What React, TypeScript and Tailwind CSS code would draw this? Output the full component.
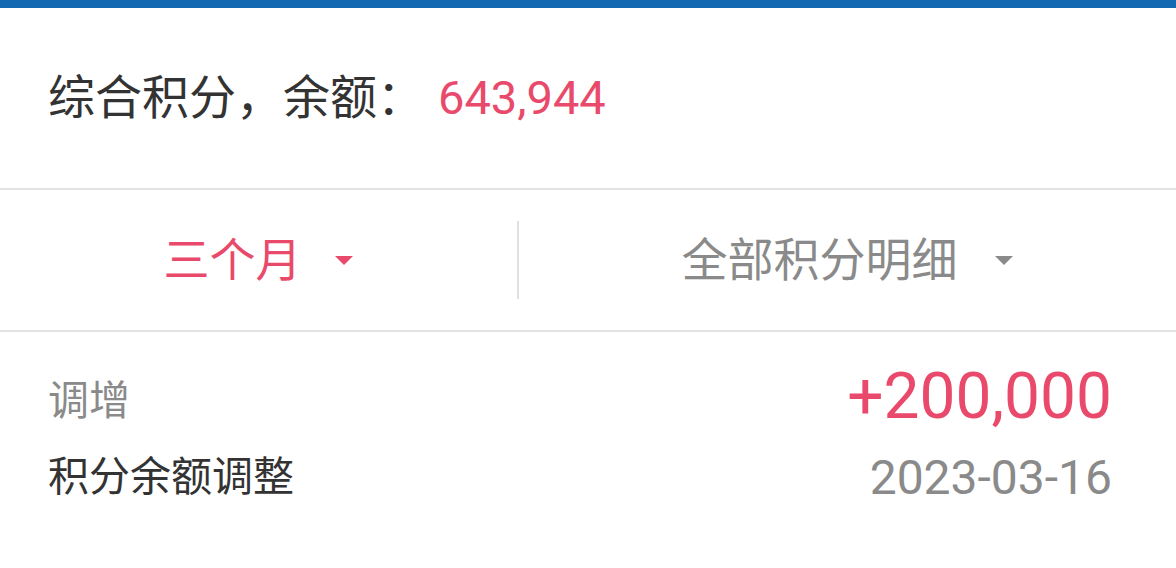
export default function App() {
  return (
    <div
      className="w-[1176px] h-[568px] bg-white overflow-hidden flex flex-col"
      style={{ fontFamily: "Roboto, 'Noto Sans CJK SC', sans-serif" }}
    >
      <div className="h-[8px] bg-[#1469b3] shrink-0" />
      {/* balance header */}
      <div className="h-[182px] shrink-0 flex items-center pl-[48px] border-b-2 border-b-[#e3e3e3]">
        <span className="text-[47px] text-[#333333]">综合积分，余额：</span>
        <span className="text-[47px] text-[#e94a6b] ml-[14px]">643,944</span>
      </div>
      {/* filters */}
      <div className="h-[142px] shrink-0 flex items-center border-b-2 border-b-[#e3e3e3]">
        <div className="w-[517px] flex items-center justify-center gap-[32px]">
          <span className="text-[46px] text-[#e94a6b]">三个月</span>
          <Caret className="fill-[#e94a6b]" />
        </div>
        <div className="w-[2px] h-[78px] bg-[#e0e0e0]" />
        <div className="flex-1 flex items-center justify-center gap-[36px]">
          <span className="text-[46px] text-[#8a8a8a]">全部积分明细</span>
          <Caret className="fill-[#8a8a8a]" />
        </div>
      </div>
      {/* record */}
      <div className="flex justify-between pl-[48px] pr-[64px]">
        <div className="flex flex-col gap-[16px] pt-[39px]">
          <span className="text-[41px] text-[#8a8a8a] leading-[60px]">调增</span>
          <span className="text-[41px] text-[#333333] leading-[60px]">积分余额调整</span>
        </div>
        <div className="flex flex-col items-end gap-[21px] pt-[35px]">
          <span className="text-[64px] text-[#e94a6b] leading-[60px]">+200,000</span>
          <span className="text-[48px] text-[#8a8a8a] leading-[60px]">2023-03-16</span>
        </div>
      </div>
    </div>
  );
}

const Caret = ({ className }: { className: string }) => (
  <svg width="20" height="11" viewBox="0 0 20 11" className={className}>
    <path d="M1 1h18l-9 9z" />
  </svg>
);
